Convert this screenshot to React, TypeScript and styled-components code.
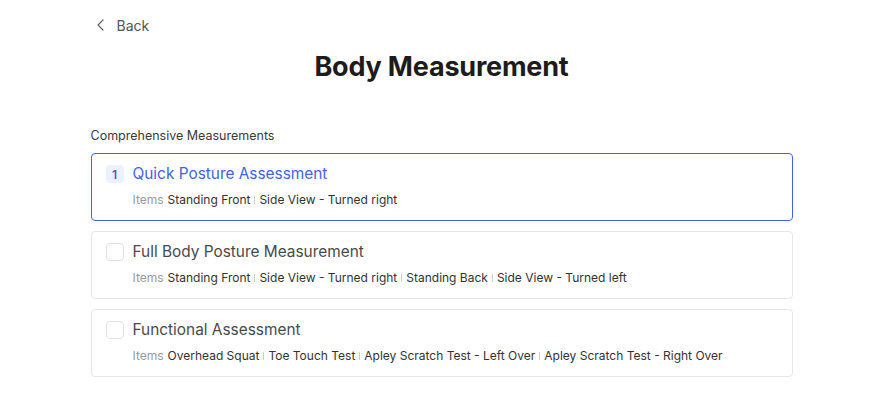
import React, { useState } from 'react'
import styled, { createGlobalStyle } from 'styled-components'

const GlobalStyle = createGlobalStyle`
  html, body {
    margin: 0;
    padding: 0;
    background: #ffffff;
    font-family: Inter, "Noto Sans", sans-serif;
  }
  body {
    padding-left: 8px;
  }
`

const Page = styled.div`
  width: 702px;
  margin: 0 auto;
  padding-top: 14px;
  display: flex;
  flex-direction: column;
`

const BackLink = styled.div`
  display: flex;
  align-items: center;
  gap: 11px;
  padding-left: 5px;
  height: 22px;
  font-size: 14px;
  color: #555555;
  cursor: pointer;
`

const Title = styled.h1`
  margin: 14px 0 0;
  text-align: center;
  font-size: 27px;
  line-height: 34px;
  font-weight: 700;
  color: #1c1c1c;
  letter-spacing: -0.2px;
`

const SectionLabel = styled.div`
  margin-top: 43px;
  font-size: 12.5px;
  line-height: 18px;
  color: #3a3a3a;
`

const List = styled.div`
  margin-top: 8px;
  display: flex;
  flex-direction: column;
  gap: 10px;
`

const Card = styled.div<{ $active: boolean }>`
  border: 1px solid ${p => (p.$active ? '#4466e6' : '#e6e6e6')};
  border-radius: 4px;
  padding: 10px 14px 11px;
  display: flex;
  flex-direction: column;
  gap: 7px;
  cursor: pointer;
`

const Head = styled.div`
  display: flex;
  align-items: center;
  gap: 9px;
`

const Check = styled.div<{ $active: boolean }>`
  width: 18px;
  height: 18px;
  box-sizing: border-box;
  border-radius: 4px;
  border: ${p => (p.$active ? 'none' : '1px solid #e2e2e2')};
  background: ${p => (p.$active ? '#edf0fd' : '#ffffff')};
  color: #3f5fe0;
  font-size: 12px;
  font-weight: 600;
  display: flex;
  align-items: center;
  justify-content: center;
`

const CardTitle = styled.div<{ $active: boolean }>`
  font-size: 15.4px;
  line-height: 20px;
  color: ${p => (p.$active ? '#4363e4' : '#4a4a4a')};
`

const Items = styled.div`
  padding-left: 27px;
  font-size: 12px;
  line-height: 18px;
  color: #333333;
  display: flex;
  align-items: center;
`

const ItemsLabel = styled.span`
  color: #9a9a9a;
  margin-right: 4px;
`

const Sep = styled.span`
  display: inline-block;
  width: 1px;
  height: 8px;
  background: #cfcfcf;
  margin: 0 4px;
`

const measurements = [
  {
    title: 'Quick Posture Assessment',
    items: ['Standing Front', 'Side View - Turned right'],
  },
  {
    title: 'Full Body Posture Measurement',
    items: ['Standing Front', 'Side View - Turned right', 'Standing Back', 'Side View - Turned left'],
  },
  {
    title: 'Functional Assessment',
    items: ['Overhead Squat', 'Toe Touch Test', 'Apley Scratch Test - Left Over', 'Apley Scratch Test - Right Over'],
  },
]

export default function App() {
  const [selected, setSelected] = useState(0)

  return (
    <>
      <GlobalStyle />
      <Page>
        <BackLink>
          <svg width="10" height="12" viewBox="0 0 10 12" fill="none">
            <path d="M7 1 L2 6 L7 11" stroke="#666" strokeWidth="1.2" strokeLinecap="round" strokeLinejoin="round" />
          </svg>
          Back
        </BackLink>
        <Title>Body Measurement</Title>
        <SectionLabel>Comprehensive Measurements</SectionLabel>
        <List>
          {measurements.map((m, i) => (
            <Card key={m.title} $active={selected === i} onClick={() => setSelected(i)}>
              <Head>
                <Check $active={selected === i}>{selected === i ? '1' : null}</Check>
                <CardTitle $active={selected === i}>{m.title}</CardTitle>
              </Head>
              <Items>
                <ItemsLabel>Items</ItemsLabel>
                {m.items.map((it, j) => (
                  <React.Fragment key={it}>
                    {j > 0 && <Sep />}
                    <span>{it}</span>
                  </React.Fragment>
                ))}
              </Items>
            </Card>
          ))}
        </List>
      </Page>
    </>
  )
}
